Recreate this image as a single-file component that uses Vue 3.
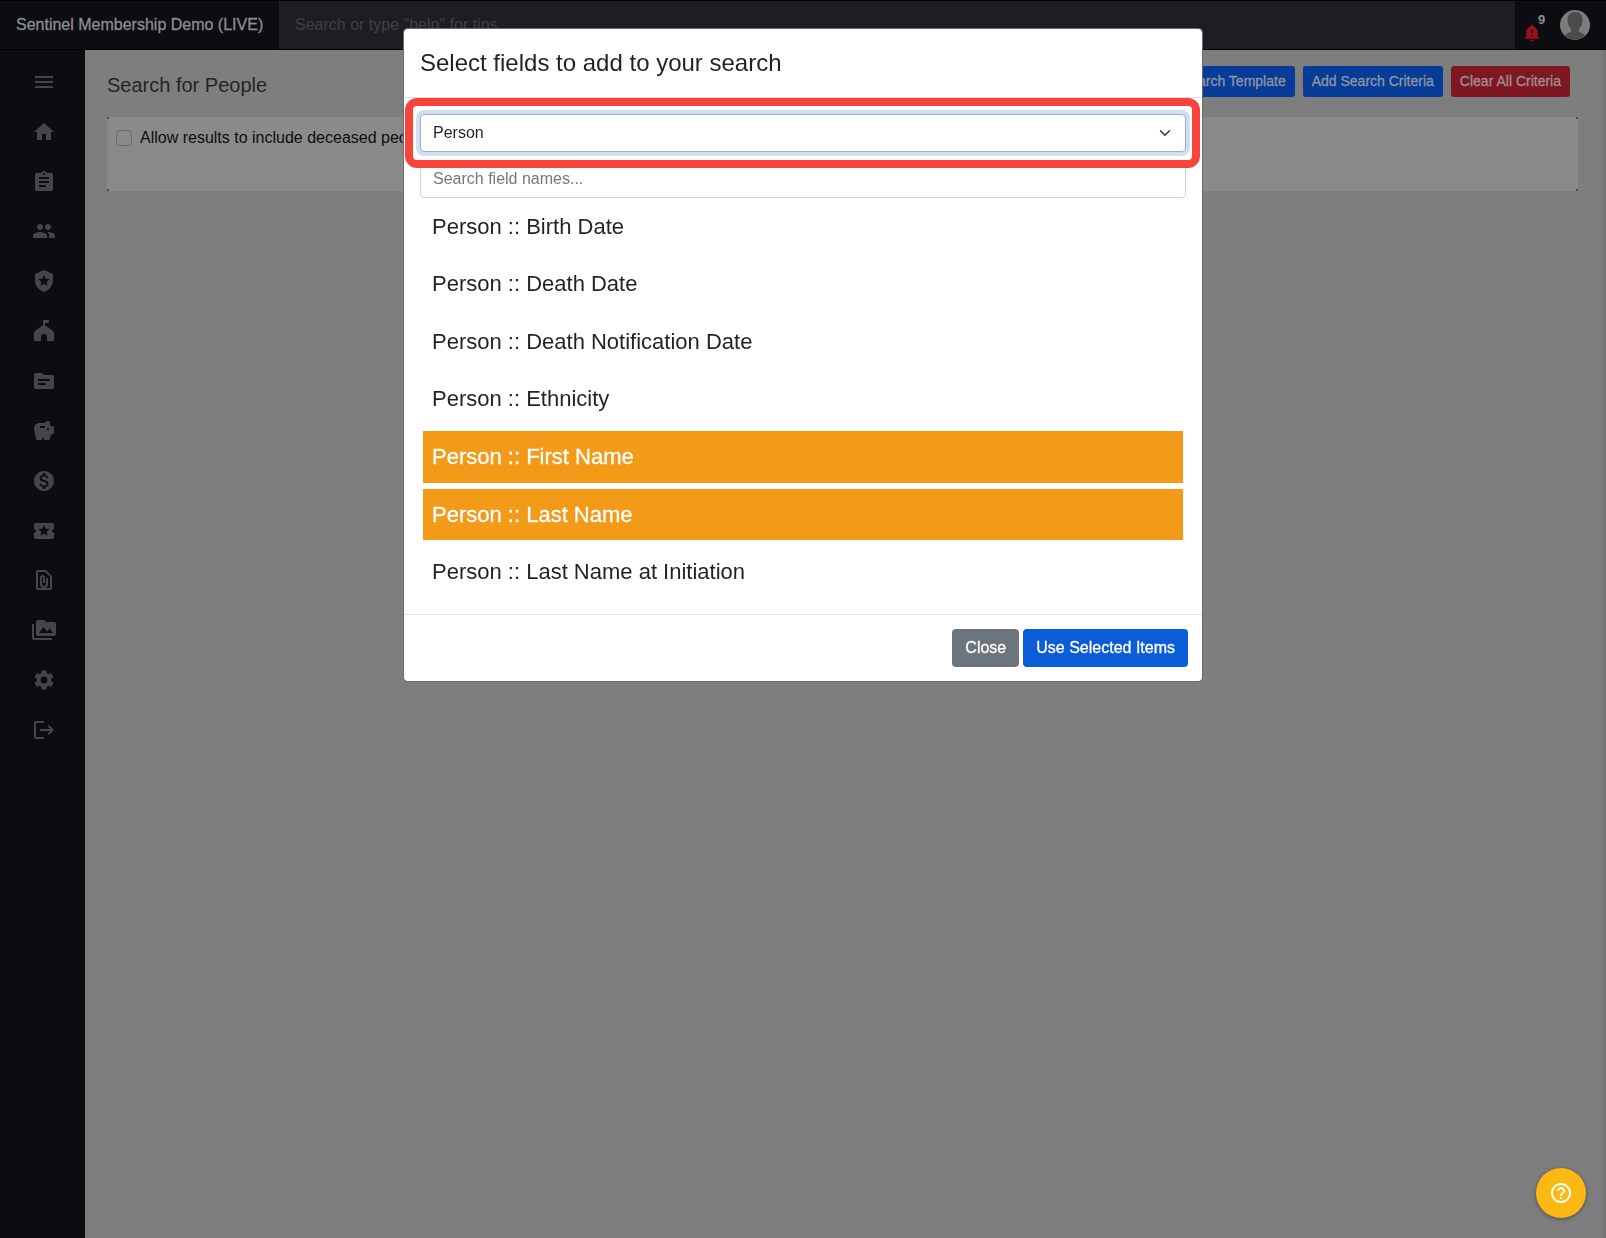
<script setup>
import { ref } from 'vue'

const nav = [
  { label: 'Menu', d: 'M3 18h18v-2H3v2zm0-5h18v-2H3v2zm0-7v2h18V6H3z' },
  { label: 'Home', d: 'M10 20v-6h4v6h5v-8h3L12 3 2 12h3v8z' },
  { label: 'Tasks', d: 'M19 3h-4.18C14.4 1.84 13.3 1 12 1s-2.4.84-2.82 2H5c-1.1 0-2 .9-2 2v14c0 1.1.9 2 2 2h14c1.1 0 2-.9 2-2V5c0-1.1-.9-2-2-2zm-7 0c.55 0 1 .45 1 1s-.45 1-1 1-1-.45-1-1 .45-1 1-1zm2 14H7v-2h7v2zm3-4H7v-2h10v2zm0-4H7V7h10v2z' },
  { label: 'People', d: 'M16 11c1.66 0 2.99-1.34 2.99-3S17.66 5 16 5s-3 1.34-3 3 1.34 3 3 3zm-8 0c1.66 0 2.99-1.34 2.99-3S9.66 5 8 5 5 6.34 5 8s1.34 3 3 3zm0 2c-2.33 0-7 1.17-7 3.5V19h14v-2.5c0-2.33-4.67-3.5-7-3.5zm8 0c-.29 0-.62.02-.97.05 1.16.84 1.97 1.97 1.97 3.45V19h6v-2.5c0-2.33-4.67-3.5-7-3.5z' },
  { label: 'Officers', d: 'M12 1 3 5v6c0 5.55 3.84 10.74 9 12 5.16-1.26 9-6.45 9-12V5l-9-4zM15.600 16.900 12 14.700l-3.600 2.200.95-4.100-3.150-2.750 4.200-.35L12 5.800l1.600 3.900 4.200.35-3.150 2.750z' },
  { label: 'Chapters', d: 'M13 1h4.500l-1 1.500 1 1.500H13v2.200L20.500 11.500 22 14v8h-7v-4a3 3 0 0 0-6 0v4H2v-8l1.500-2.500L11 6.200V1h2z' },
  { label: 'Files', d: 'M20 6h-8l-2-2H4c-1.100 0-1.990.9-1.990 2L2 18c0 1.100.9 2 2 2h16c1.100 0 2-.9 2-2V8c0-1.100-.9-2-2-2zm-6 10H6v-2h8v2zm4-4H6v-2h12v2z' },
  { label: 'Giving', d: 'M19.830 7.500l-2.270-2.270c.07-.42.18-.81.32-1.150.11-.26.15-.56.09-.87-.13-.72-.83-1.220-1.570-1.210-1.590.03-3 .81-3.900 2h-5C4.460 4 2 6.460 2 9.500S4.500 21 4.500 21H10v-2h2v2h5.500l1.680-5.590L22 14.470V7.500h-2.170zM13 9H8V7h5v2zm3 2c-.55 0-1-.45-1-1s.45-1 1-1 1 .45 1 1-.45 1-1 1z' },
  { label: 'Payments', d: 'M12 2C6.480 2 2 6.480 2 12s4.480 10 10 10 10-4.480 10-10S17.520 2 12 2zm1.410 16.090V20h-2.670v-1.930c-1.710-.36-3.160-1.460-3.270-3.400h1.960c.1 1.050.82 1.870 2.650 1.870 1.960 0 2.400-.98 2.400-1.590 0-.83-.44-1.610-2.670-2.140-2.480-.6-4.180-1.620-4.180-3.670 0-1.720 1.390-2.840 3.110-3.210V4h2.670v1.950c1.860.45 2.790 1.860 2.850 3.390H14.300c-.05-1.110-.64-1.870-2.220-1.870-1.500 0-2.400.68-2.400 1.640 0 .84.65 1.390 2.670 1.910s4.180 1.390 4.180 3.910c-.01 1.830-1.380 2.830-3.120 3.160z' },
  { label: 'Events', d: 'M20 12c0-1.100.9-2 2-2V6c0-1.100-.9-2-2-2H4c-1.100 0-1.990.9-1.990 2v4c1.100 0 1.990.9 1.990 2s-.89 2-2 2v4c0 1.100.9 2 2 2h16c1.100 0 2-.9 2-2v-4c-1.100 0-2-.9-2-2zm-4.420 4.800L12 14.500l-3.580 2.300 1.080-4.120-3.290-2.690 4.240-.25L12 5.800l1.540 3.950 4.240.25-3.290 2.690 1.090 4.110z' },
  { label: 'Documents', d: 'M14 2H6a2 2 0 0 0-2 2v16c0 1.100.9 2 2 2h12a2 2 0 0 0 2-2V8l-6-6zm4 18H6V4h7.200L18 8.800V20zM14 10v6a2 2 0 0 1-4 0V9.500a.5.5 0 0 1 1 0V15h2V9.500a2.500 2.500 0 0 0-5 0V16a4 4 0 0 0 8 0v-6h-2z' },
  { label: 'Photos', d: 'M2 6H0v14c0 1.100.9 2 2 2h18v-2H2V6zm20-2h-8l-2-2H6c-1.100 0-1.990.9-1.990 2L4 16c0 1.100.9 2 2 2h16c1.100 0 2-.9 2-2V6c0-1.100-.9-2-2-2zM7 15l4.500-6 3.500 4.510 2.500-3.010L21 15H7z' },
  { label: 'Settings', d: 'M19.140 12.940c.04-.3.06-.61.06-.94 0-.32-.02-.64-.07-.94l2.030-1.580c.18-.14.23-.41.12-.61l-1.920-3.320c-.12-.22-.37-.29-.59-.22l-2.390.96c-.5-.38-1.030-.7-1.620-.94l-.36-2.540c-.04-.24-.24-.41-.48-.41h-3.840c-.24 0-.43.17-.47.41l-.36 2.540c-.59.24-1.130.57-1.620.94l-2.390-.96c-.22-.08-.47 0-.59.22L2.740 8.870c-.12.21-.08.47.12.61l2.030 1.580c-.05.3-.09.63-.09.94s.02.64.07.94l-2.030 1.580c-.18.14-.23.41-.12.61l1.920 3.320c.12.22.37.29.59.22l2.390-.96c.5.38 1.030.7 1.620.94l.36 2.540c.05.24.24.41.48.41h3.840c.24 0 .44-.17.47-.41l.36-2.540c.59-.24 1.130-.56 1.620-.94l2.390.96c.22.08.47 0 .59-.22l1.920-3.320c.12-.22.07-.47-.12-.61l-2.010-1.580zM12 15.600c-1.980 0-3.600-1.620-3.600-3.600s1.620-3.600 3.600-3.600 3.600 1.620 3.600 3.600-1.620 3.600-3.600 3.600z' },
  { label: 'Log out', d: 'M4 3h8v2H4v14h8v2H4c-1.100 0-2-.9-2-2V5c0-1.100.9-2 2-2zm13 4 5 5-5 5-1.400-1.400 2.600-2.600H8v-2h10.200l-2.600-2.600L17 7z' },
]

const fields = ref([
  { name: 'Birth Date', selected: false },
  { name: 'Death Date', selected: false },
  { name: 'Death Notification Date', selected: false },
  { name: 'Ethnicity', selected: false },
  { name: 'First Name', selected: true },
  { name: 'Last Name', selected: true },
  { name: 'Last Name at Initiation', selected: false },
])
</script>

<template>
  <div class="app">
    <header class="topbar">
      <a class="brand" href="#">Sentinel Membership Demo (LIVE)</a>
      <input class="global-search" type="text" aria-label="Search" placeholder="Search or type &quot;help&quot; for tips" />
      <div class="account">
        <button class="alerts" type="button" aria-label="Notifications">
          <svg width="20" height="20" viewBox="0 0 24 24"><path fill="#9c0e1a" d="M12 22c1.100 0 2-.9 2-2h-4c0 1.100.9 2 2 2zm7-5v-6c0-3.350-2.360-6.150-5.500-6.840V3.500a1.500 1.500 0 0 0-3 0v.66C7.360 4.850 5 7.650 5 11v6l-2 1v1h18v-1l-2-1zm-6-1h-2v-2h2v2zm0-4h-2V8h2v4z" /></svg>
          <span class="count">9</span>
        </button>
        <button class="avatar" type="button" aria-label="Account">
          <svg width="30" height="30" viewBox="0 0 30 30">
            <circle cx="15" cy="15" r="15" fill="#7c7c7c" />
            <path fill="#4b4b4b" d="M15 2c5 0 7.500 3.500 7.500 8 0 4-1.500 7-3.500 9v2.500c0 1 4 1.500 6.500 4A15 15 0 0 1 4.500 25.500C7 23 11 22.500 11 21.500V19c-2-2-3.500-5-3.500-9C7.500 5.500 10 2 15 2z" />
          </svg>
        </button>
      </div>
    </header>

    <div class="shell">
      <nav class="sidebar" aria-label="Main">
        <a v-for="item in nav" :key="item.label" href="#" :aria-label="item.label">
          <svg width="24" height="24" viewBox="0 0 24 24"><path fill="currentColor" fill-rule="evenodd" :d="item.d" /></svg>
        </a>
      </nav>

      <main class="content">
        <div class="page-head">
          <h1>Search for People</h1>
          <div class="actions">
            <button class="btn-sm" type="button">Save Search Template</button>
            <button class="btn-sm" type="button">Add Search Criteria</button>
            <button class="btn-sm danger" type="button">Clear All Criteria</button>
          </div>
        </div>
        <section class="criteria">
          <label class="check">
            <input type="checkbox" />
            Allow results to include deceased people
          </label>
        </section>
      </main>
    </div>

    <div class="modal-layer">
      <div class="modal" role="dialog" aria-modal="true" aria-labelledby="modal-title">
        <div class="modal-header"><h2 id="modal-title">Select fields to add to your search</h2></div>
        <div class="modal-body">
          <div class="category">
            <select aria-label="Category"><option>Person</option></select>
          </div>
          <input class="field-search" type="text" aria-label="Search field names" placeholder="Search field names..." />
          <ul class="fields">
            <li v-for="f in fields" :key="f.name">
              <button type="button" :class="{ selected: f.selected }" :aria-pressed="f.selected" @click="f.selected = !f.selected">Person :: {{ f.name }}</button>
            </li>
          </ul>
        </div>
        <div class="modal-footer">
          <button class="btn secondary" type="button">Close</button>
          <button class="btn" type="button">Use Selected Items</button>
        </div>
      </div>
    </div>

    <button class="help" type="button" aria-label="Help">
      <svg width="24" height="24" viewBox="0 0 24 24"><path fill="#fff" d="M11 18h2v-2h-2v2zm1-16C6.480 2 2 6.480 2 12s4.480 10 10 10 10-4.480 10-10S17.520 2 12 2zm0 18c-4.410 0-8-3.590-8-8s3.590-8 8-8 8 3.590 8 8-3.590 8-8 8zm0-14c-2.210 0-4 1.790-4 4h2c0-1.100.9-2 2-2s2 .9 2 2c0 2-3 1.750-3 5h2c0-2.250 3-2.500 3-5 0-2.210-1.790-4-4-4z" /></svg>
    </button>
  </div>
</template>

<style>
body {
  margin: 0;
  background: #7e7e7e;
}
</style>

<style scoped>
* {
  box-sizing: border-box;
}
.app {
  display: flex;
  flex-direction: column;
  min-height: 100vh;
  background: #7e7e7e;
  color: #0d0e10;
  font-family: "Liberation Sans", Arial, sans-serif;
  font-size: 16px;
  line-height: 24px;
}
button, input, select {
  margin: 0;
  font: inherit;
}
button {
  border: 0;
  cursor: pointer;
}
a {
  text-decoration: none;
}
.topbar {
  display: flex;
  height: 50px;
  border-top: 1px solid #000;
  border-bottom: 1px solid #000;
  background: #0b0d10;
}
.brand {
  flex: 0 0 279px;
  padding: 12px 0 0 16px;
  color: #8d8e90;
  white-space: nowrap;
  -webkit-text-stroke: 0.3px #8d8e90;
}
.global-search {
  flex: 1;
  min-width: 0;
  padding: 0 16px;
  border: 0;
  background: #1d1e21;
  color: #8d8e90;
}
.global-search::placeholder {
  color: #3f4043;
  opacity: 1;
}
.account {
  display: flex;
  flex: 0 0 91px;
  align-items: center;
  justify-content: space-between;
  padding: 0 16px 0 7px;
}
.alerts {
  display: flex;
  align-items: flex-start;
  padding: 5px 0 0;
  background: none;
  color: #8d8e90;
}
.alerts svg {
  margin-top: 11px;
}
.count {
  margin-left: -4px;
  font-size: 13px;
  line-height: 16px;
  font-weight: 700;
}
.avatar {
  width: 30px;
  height: 30px;
  padding: 0;
  background: none;
}
.avatar svg,
.sidebar svg {
  display: block;
}
.shell {
  display: flex;
  flex: 1;
  background: linear-gradient(to right, #0b0d10 85px, transparent 85px);
}
.sidebar {
  display: grid;
  flex: 0 0 85px;
  grid-auto-rows: 1fr;
  height: 698px;
  margin-top: 7px;
}
.sidebar a {
  display: grid;
  place-items: center;
  padding-left: 3px;
  color: #454648;
}
.content {
  flex: 1;
  min-width: 0;
  padding: 16px 28px 0 22px;
  box-shadow: inset -4px 0 3px -2px #707070;
}
.page-head {
  display: flex;
  align-items: flex-start;
  justify-content: space-between;
  padding-right: 8px;
}
h1 {
  margin: 4px 0 0;
  font-size: 20px;
  font-weight: 400;
  line-height: 30px;
  color: #242527;
}
.actions {
  display: flex;
  gap: 8px;
}
.btn-sm {
  height: 31px;
  padding: 0 9px 2px;
  border-radius: 3px;
  background: #063b98;
  color: #90969f;
  font-size: 14px;
  white-space: nowrap;
  -webkit-text-stroke: 0.3px #90969f;
}
.btn-sm.danger {
  background: #7f1722;
  color: #a08f92;
  -webkit-text-stroke-color: #a08f92;
}
.criteria {
  height: 74px;
  margin-top: 17px;
  padding: 9px;
  background:
    linear-gradient(#4c4c4c, #4c4c4c) left top / 2px 2px,
    linear-gradient(#4c4c4c, #4c4c4c) right top / 2px 2px,
    linear-gradient(#4c4c4c, #4c4c4c) left bottom / 2px 2px,
    linear-gradient(#4c4c4c, #4c4c4c) right bottom / 2px 2px,
    #8a8a8a;
  background-repeat: no-repeat;
}
.check {
  display: flex;
  align-items: center;
  gap: 8px;
}
.check input {
  appearance: none;
  width: 16px;
  height: 16px;
  border: 1px solid #6b6b6b;
  border-radius: 4px;
}
.modal-layer {
  position: fixed;
  inset: 0;
  padding-top: 29px;
}
.modal {
  max-width: 798px;
  margin: 0 auto;
  border-radius: 4px;
  background: #fff;
  color: #1f2227;
  box-shadow: 0 0 0 1px #6c6c6c;
}
.modal-header {
  padding: 16px;
  border-bottom: 1px solid #dee2e6;
}
h2 {
  margin: 0;
  font-size: 24px;
  font-weight: 400;
  line-height: 36px;
}
.modal-body {
  padding: 16px 16px 13px;
}
.category {
  position: relative;
}
.category::after {
  content: "";
  position: absolute;
  inset: -16px -14px -16px -15px;
  border: 8px solid #f8443b;
  border-radius: 12px;
  pointer-events: none;
}
.category select {
  display: block;
  appearance: none;
  width: 100%;
  height: 38px;
  padding: 0 36px 0 12px;
  border: 1px solid #93aedb;
  border-radius: 4px;
  background: #fff url("data:image/svg+xml,%3Csvg xmlns='http://www.w3.org/2000/svg' viewBox='0 0 16 16'%3E%3Cpath fill='none' stroke='%23343a40' stroke-linecap='round' stroke-linejoin='round' stroke-width='2' d='m2 5 6 6 6-6'/%3E%3C/svg%3E") no-repeat right 14px center / 12px;
  color: #1f2227;
  box-shadow: 0 0 0 4px #d4def2;
}
.field-search {
  display: block;
  width: 100%;
  height: 38px;
  margin-top: 8px;
  padding: 0 12px;
  border: 1px solid #ced4da;
  border-radius: 4px;
}
.field-search::placeholder {
  color: #73787d;
  opacity: 1;
}
.fields {
  display: grid;
  grid-auto-rows: 1fr;
  height: 403px;
  margin: 0;
  padding: 0 3px;
  list-style: none;
}
.fields li {
  display: grid;
  padding: 3px 0;
}
.fields button {
  padding: 0 9px;
  background: #fff;
  color: #1f2227;
  font-size: 22px;
  text-align: left;
}
.fields .selected {
  background: #f39a18;
  color: #fff;
  -webkit-text-stroke: 0.3px #fff;
}
.modal-footer {
  display: flex;
  justify-content: flex-end;
  gap: 4px;
  padding: 14px;
  border-top: 1px solid #dee2e6;
}
.btn {
  height: 38px;
  padding: 0 13px;
  border-radius: 4px;
  background: #0b5cd8;
  color: #fff;
  -webkit-text-stroke: 0.3px #fff;
}
.btn.secondary {
  background: #6c757b;
}
.help {
  position: fixed;
  right: 20px;
  bottom: 20px;
  display: grid;
  place-items: center;
  width: 50px;
  height: 50px;
  padding: 0;
  border-radius: 50%;
  background: #fdb913;
  box-shadow: 0 1px 4px rgba(0, 0, 0, 0.4);
}
</style>
